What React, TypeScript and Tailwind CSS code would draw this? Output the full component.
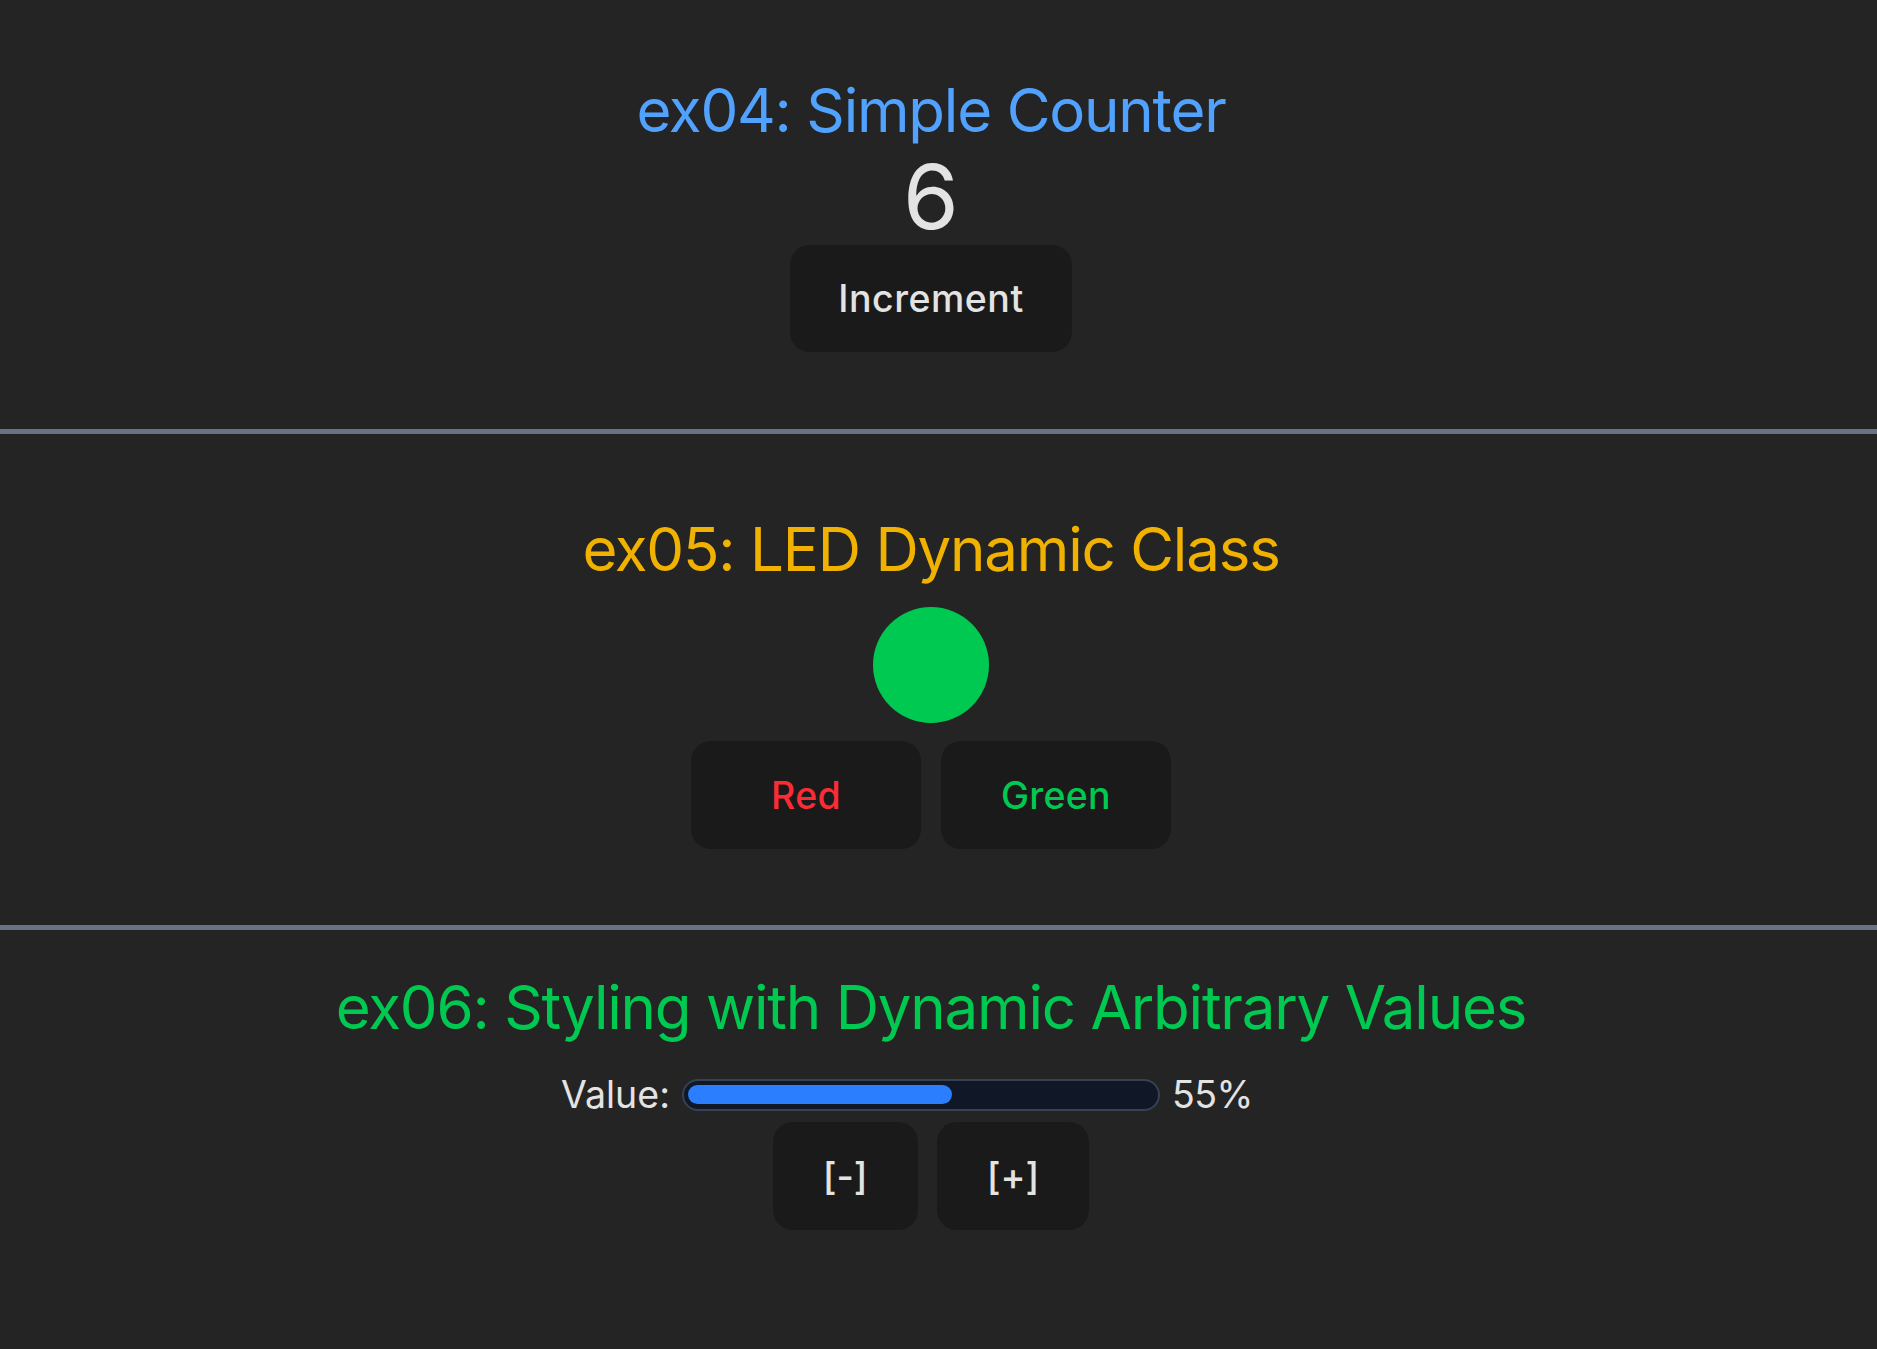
import { useState } from "react";

function Divider() {
  return <div className="h-[5px] w-full bg-[#6a7282]" />;
}

export default function App() {
  const [count, setCount] = useState(6);
  const [led, setLed] = useState<"red" | "green">("green");
  const [value, setValue] = useState(55);

  return (
    <div className="min-h-screen bg-[#242424] font-['Inter',sans-serif] text-[#e3e3e3]">
      {/* ex04 */}
      <section className="pt-[80px] pb-[77px]">
        <div className="flex flex-col items-center pr-[15px]">
          <h1 className="text-[60px] leading-none font-normal tracking-[-1.2px] text-[#51a2ff]">ex04: Simple Counter</h1>
          <div className="mt-[12px] text-[90px] leading-none">{count}</div>
          <button
            className="mt-[3px] h-[107px] rounded-[20px] bg-[#1a1a1a] px-[48px] text-[37.5px] leading-[45px] font-medium tracking-[0.5px] text-[#e3e3e3]"
            onClick={() => setCount(count + 1)}
          >
            Increment
          </button>
        </div>
      </section>
      <Divider />

      {/* ex05 */}
      <section className="pt-[85px] pb-[76px]">
        <div className="flex flex-col items-center pr-[15px]">
          <h2 className="text-[60px] leading-none font-normal tracking-[-1.2px] text-[#f0b100]">ex05: LED Dynamic Class</h2>
          <div
            className={
              led === "green"
                ? "mt-[28px] h-[116px] w-[116px] rounded-full bg-[#00c951]"
                : "mt-[28px] h-[116px] w-[116px] rounded-full bg-[#fb2c36]"
            }
          />
          <div className="mt-[18px] flex gap-[20px]">
            <button
              className="h-[108px] w-[230px] rounded-[20px] bg-[#1a1a1a] text-[37.5px] leading-[45px] font-medium tracking-[0.3px] text-[#fb2c36]"
              onClick={() => setLed("red")}
            >
              Red
            </button>
            <button
              className="h-[108px] w-[230px] rounded-[20px] bg-[#1a1a1a] text-[37.5px] leading-[45px] font-medium tracking-[0.3px] text-[#00c951]"
              onClick={() => setLed("green")}
            >
              Green
            </button>
          </div>
        </div>
      </section>
      <Divider />

      {/* ex06 */}
      <section className="pt-[47px] pb-[100px]">
        <div className="flex flex-col items-center pr-[15px]">
          <h2 className="text-[60px] leading-none font-normal tracking-[-1.2px] text-[#00c951]">
            ex06: Styling with Dynamic Arbitrary Values
          </h2>
          <div className="mt-[35px] flex h-[45px] items-center gap-[12px] text-[37.5px] leading-[45px]">
            <span>Value:</span>
            <div className="h-[32px] w-[478px] rounded-full border-[2.5px] border-[#364153] bg-[#101828] p-[4.5px]">
              <div className="h-full rounded-full bg-[#2b7fff]" style={{ width: `${value * 4.8}px` }} />
            </div>
            <span className="w-[129px] tracking-[-0.6px]">{value}%</span>
          </div>
          <div className="mt-[5px] flex gap-[19px]">
            <button
              className="h-[108px] rounded-[20px] bg-[#1a1a1a] px-[50px] text-[37.5px] leading-[45px] font-medium text-[#e3e3e3]"
              onClick={() => setValue(Math.max(0, value - 5))}
            >
              [-]
            </button>
            <button
              className="h-[108px] rounded-[20px] bg-[#1a1a1a] px-[50px] text-[37.5px] leading-[45px] font-medium text-[#e3e3e3]"
              onClick={() => setValue(Math.min(100, value + 5))}
            >
              [+]
            </button>
          </div>
        </div>
      </section>
    </div>
  );
}
